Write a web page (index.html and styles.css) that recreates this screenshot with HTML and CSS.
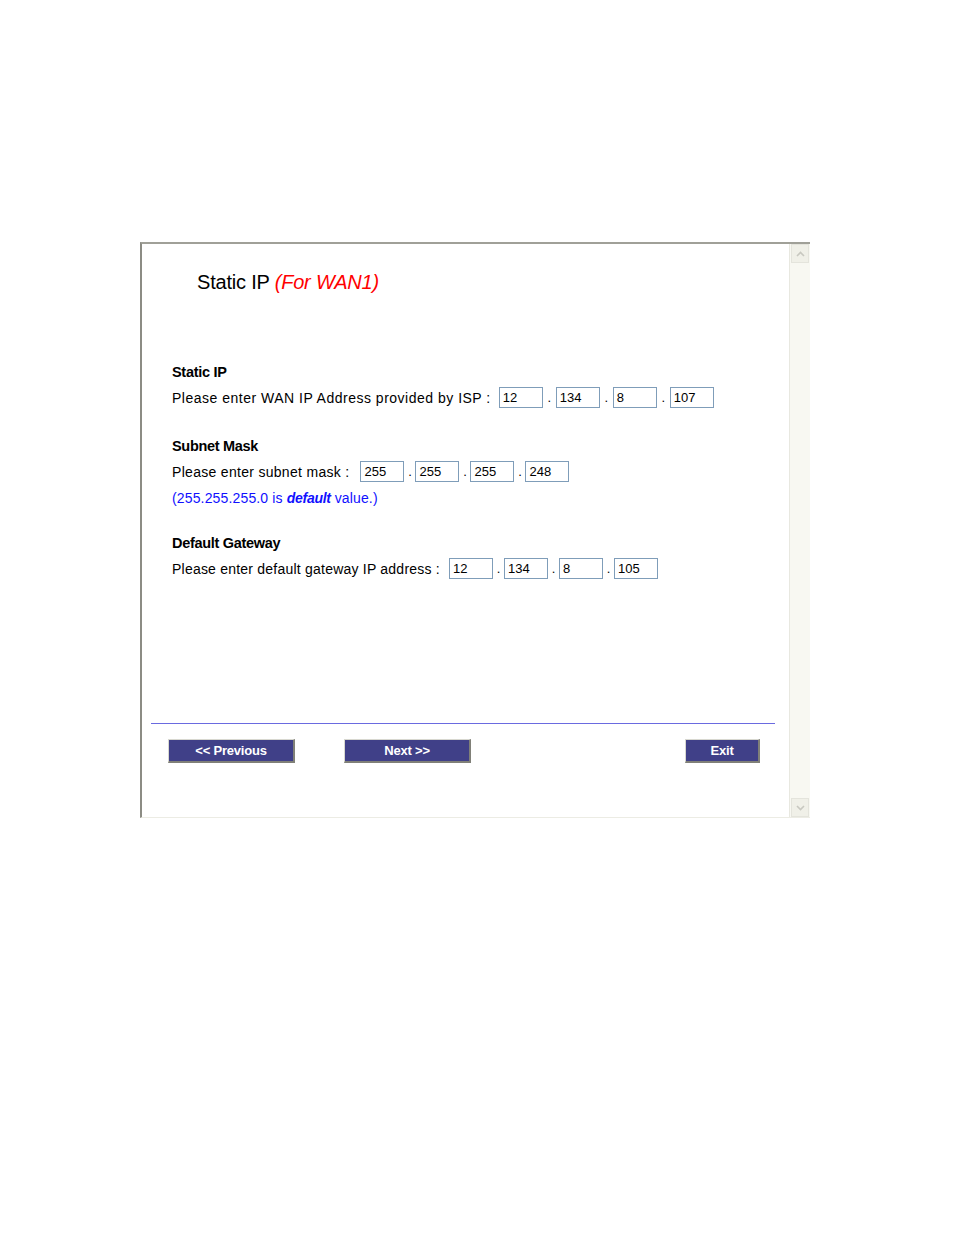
FILE: index.html
```html
<!DOCTYPE html>
<html>
<head>
<meta charset="utf-8">
<link rel="stylesheet" href="styles.css">
</head>
<body>
<div class="frame">
  <div class="content">
    <h1 class="title">Static IP <span class="wan">(For WAN1)</span></h1>
    <div class="section s1">
      <div class="label">Static IP</div>
      <div class="row">
        <span class="prompt p-wan">Please enter WAN IP Address provided by ISP :</span>
        <span class="ip ip-wan">
          <span class="box">12</span><span class="dot">.</span>
          <span class="box">134</span><span class="dot">.</span>
          <span class="box">8</span><span class="dot">.</span>
          <span class="box">107</span>
        </span>
      </div>
    </div>
    <div class="section s2">
      <div class="label">Subnet Mask</div>
      <div class="row">
        <span class="prompt p-mask">Please enter subnet mask :</span>
        <span class="ip ip-mask">
          <span class="box">255</span><span class="dot">.</span>
          <span class="box">255</span><span class="dot">.</span>
          <span class="box">255</span><span class="dot">.</span>
          <span class="box">248</span>
        </span>
      </div>
      <div class="hint">(255.255.255.0 is <b><i>default</i></b> value.)</div>
    </div>
    <div class="section s3">
      <div class="label">Default Gateway</div>
      <div class="row">
        <span class="prompt p-gw">Please enter default gateway IP address :</span>
        <span class="ip ip-gw">
          <span class="box">12</span><span class="dot">.</span>
          <span class="box">134</span><span class="dot">.</span>
          <span class="box">8</span><span class="dot">.</span>
          <span class="box">105</span>
        </span>
      </div>
    </div>
    <div class="rule"></div>
    <div class="buttons">
      <span class="btn prev">&lt;&lt; Previous</span>
      <span class="btn next">Next &gt;&gt;</span>
      <span class="btn exit">Exit</span>
    </div>
  </div>
  <div class="scrollbar">
    <div class="arrow up"><svg width="9" height="6" viewBox="0 0 9 6"><path d="M1 5 L4.5 1.5 L8 5" fill="none" stroke="#c8c8c0" stroke-width="1.6"/></svg></div>
    <div class="track"></div>
    <div class="arrow down"><svg width="9" height="6" viewBox="0 0 9 6"><path d="M1 1 L4.5 4.5 L8 1" fill="none" stroke="#c8c8c0" stroke-width="1.6"/></svg></div>
  </div>
</div>
</body>
</html>
```
FILE: styles.css
```css
html, body {
  margin: 0;
  padding: 0;
  background: #fff;
}
body {
  font-family: "Liberation Sans", Arial, sans-serif;
  color: #000;
}
.frame {
  margin: 242px 0 0 140px;
  width: 670px;
  height: 576px;
  box-sizing: border-box;
  border-left: 2px solid #8c8c84;
  border-top: 2px solid #a0a098;
  border-bottom: 1px solid #ecece4;
  display: flex;
}
.content {
  flex: 1;
  position: relative;
  padding: 0 0 0 30px;
}
.title {
  margin: 25px 0 0 25px;
  font-size: 20px;
  font-weight: normal;
  line-height: 26px;
  letter-spacing: -0.2px;
}
.wan {
  color: #ff0000;
  font-style: italic;
}
.section {
  font-size: 14px;
}
.s1 { margin-top: 68px; }
.s2 { margin-top: 29px; }
.s3 { margin-top: 27px; }
.label {
  font-weight: bold;
  font-size: 14.5px;
  line-height: 18px;
  letter-spacing: -0.3px;
}
.row {
  display: flex;
  align-items: center;
  margin-top: 6px;
  height: 21px;
}
.prompt {
  font-size: 14px;
  line-height: 18px;
}
.p-wan { letter-spacing: 0.5px; }
.p-mask { letter-spacing: 0.3px; }
.p-gw { letter-spacing: 0.22px; }
.ip {
  display: flex;
  align-items: center;
}
.ip-wan { margin-left: 8px; }
.ip-mask { margin-left: 11px; }
.ip-gw { margin-left: 9px; }
.box {
  box-sizing: border-box;
  width: 44px;
  height: 21px;
  border: 1px solid #7f9db9;
  font-size: 13px;
  line-height: 19px;
  padding-left: 3px;
  background: #fff;
}
.dot {
  font-size: 13px;
  width: 13px;
  text-align: center;
  line-height: 28px;
}
.ip-mask .dot, .ip-gw .dot { width: 11px; }
.hint {
  color: #1010ff;
  font-size: 14px;
  margin-top: 7px;
  line-height: 18px;
  letter-spacing: 0.15px;
}
.hint i { letter-spacing: -0.3px; }
.rule {
  position: absolute;
  left: 9px;
  top: 479px;
  width: 624px;
  height: 1px;
  background: #6a6ae0;
}
.buttons {
  position: absolute;
  left: 0;
  top: 495px;
  width: 100%;
}
.btn {
  position: absolute;
  box-sizing: border-box;
  height: 24px;
  background: #404088;
  color: #fff;
  font-weight: bold;
  font-size: 13px;
  text-align: center;
  line-height: 21px;
  letter-spacing: -0.2px;
  border-top: 1px solid #d8d8d0;
  border-left: 1px solid #d8d8d0;
  border-right: 2px solid #808078;
  border-bottom: 2px solid #808078;
}
.prev { left: 26px; width: 127px; }
.next { left: 202px; width: 127px; }
.exit { left: 543px; width: 75px; }
.scrollbar {
  width: 20px;
  background: #f8f8f2;
  border-left: 1px solid #e8e8e0;
  display: flex;
  flex-direction: column;
}
.arrow {
  height: 17px;
  margin: 0 1px;
  background: #f0f0e8;
  border: 1px solid #e4e4dc;
  display: flex;
  align-items: center;
  justify-content: center;
}
.track { flex: 1; }
```
